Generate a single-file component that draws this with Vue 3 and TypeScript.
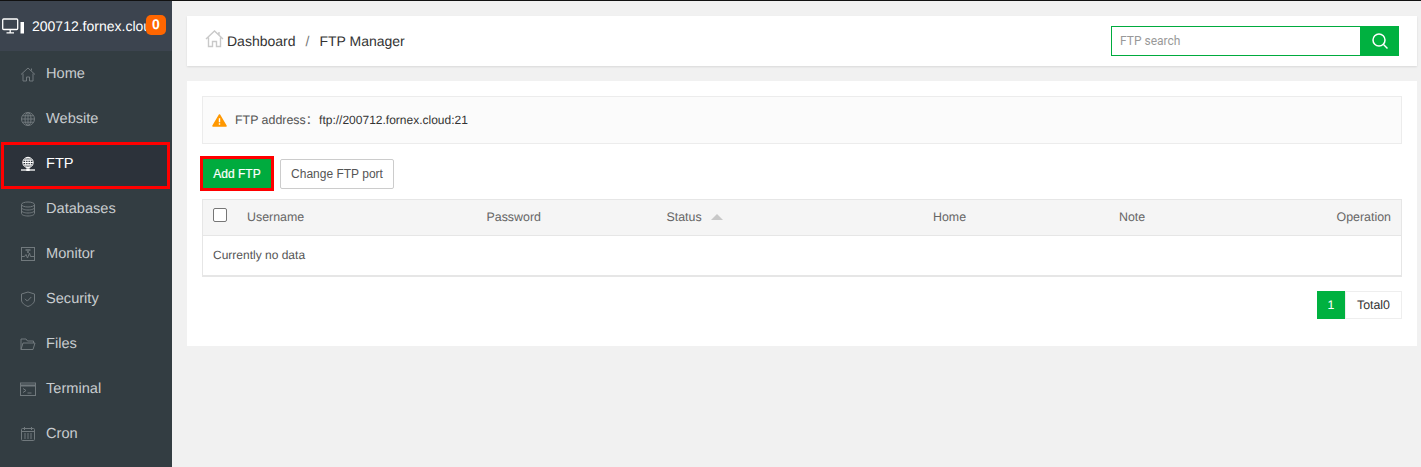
<script setup lang="ts">
interface Item { label: string; icon: string; active?: boolean }
const items: Item[] = [
  { label: 'Home', icon: 'home' },
  { label: 'Website', icon: 'globe' },
  { label: 'FTP', icon: 'ftp', active: true },
  { label: 'Databases', icon: 'db' },
  { label: 'Monitor', icon: 'monitor' },
  { label: 'Security', icon: 'shield' },
  { label: 'Files', icon: 'folder' },
  { label: 'Terminal', icon: 'term' },
  { label: 'Cron', icon: 'cal' },
]
</script>

<template>
  <div class="page">
    <aside class="side">
      <div class="brand">
        <svg class="pc" width="23" height="16" viewBox="0 0 23 16" fill="none" stroke="#fff" stroke-width="1.300">
          <rect x="0.700" y="1" width="15" height="10.500" rx="1" />
          <path d="M4.500 14.800h7.500M8.200 12v2.500" />
          <rect x="18.500" y="4" width="3.500" height="11.500" fill="#fff" stroke="none" />
        </svg>
        <span class="host">200712.fornex.cloud</span>
        <span class="badge">0</span>
      </div>
      <nav class="nav">
        <div v-for="it in items" :key="it.label" class="item" :class="{ active: it.active }">
          <svg class="ico" width="16" height="16" viewBox="0 0 16 16" fill="none" stroke="currentColor" stroke-width="1">
            <template v-if="it.icon === 'home'">
              <path d="M1 8.500 8 2l7 6.500M3 7.500V15h3.500v-4h3v4H13V7.500M11.500 2.500v2" />
            </template>
            <template v-else-if="it.icon === 'globe'">
              <circle cx="8" cy="8" r="6.500" />
              <ellipse cx="8" cy="8" rx="3" ry="6.500" />
              <path d="M8 1.500v13M1.500 8h13M2.500 4.800h11M2.500 11.200h11" />
            </template>
            <template v-else-if="it.icon === 'ftp'">
              <circle cx="8" cy="6.500" r="5.200" />
              <ellipse cx="8" cy="6.500" rx="2.400" ry="5.200" />
              <path d="M8 1.300v10.400M2.800 6.500h10.400M3.500 4.200h9M3.500 8.800h9" />
              <path d="M1 14h14" stroke-width="1.300" />
              <rect x="6.300" y="12.300" width="3.400" height="2.700" fill="currentColor" stroke="none" />
            </template>
            <template v-else-if="it.icon === 'db'">
              <ellipse cx="8" cy="3.500" rx="6.500" ry="2.500" />
              <path d="M1.500 3.500v9c0 1.400 2.900 2.500 6.500 2.500s6.500-1.100 6.500-2.500v-9M1.500 6.500c0 1.400 2.900 2.500 6.500 2.500s6.500-1.100 6.500-2.500M1.500 9.500c0 1.400 2.900 2.500 6.500 2.500s6.500-1.100 6.500-2.500" />
            </template>
            <template v-else-if="it.icon === 'monitor'">
              <rect x="1.500" y="1.500" width="13" height="13" />
              <path d="M1.500 10.500h3l1.500-2 1.500 3.500 2-5 1 3.500h3.500" />
              <path d="M5.500 4h5M7 6h2" stroke-width="1.300" />
            </template>
            <template v-else-if="it.icon === 'shield'">
              <path d="M8 1 14.500 3v6c0 3-3 5.200-6.500 6.500C4.500 14.200 1.500 12 1.500 9V3z" />
              <path d="m5 7.800 2.300 2.300L11.300 6" />
            </template>
            <template v-else-if="it.icon === 'folder'">
              <path d="M1 13.500V3h5l1.500 2h6v2M1 13.500 3 7h12l-2 6.500z" />
            </template>
            <template v-else-if="it.icon === 'term'">
              <rect x="0.500" y="2" width="15" height="12.500" />
              <path d="M.5 4.500h15" stroke-width="2" />
              <path d="m3 7.500 3 2-3 2M7.500 12h4" />
            </template>
            <template v-else>
              <rect x="1.500" y="2.500" width="13" height="12" rx="1" />
              <path d="M4.500 1v3M11.500 1v3M1.500 5.500h13" />
              <path d="M4 8h8M4 10h8M4 12h8" stroke-dasharray="2 1" />
            </template>
          </svg>
          <span class="label">{{ it.label }}</span>
        </div>
      </nav>
    </aside>

    <main class="main">
      <header class="crumbs">
        <div class="trail">
          <svg class="crumb-home" width="19" height="19" viewBox="0 0 19 19" fill="none" stroke="#c9c9c9" stroke-width="1.400">
            <path d="M1 10 9.500 2 18 10M3.500 8.500V17.500H7.500V12.500H11.500V17.500H15.500V8.500M14 3v3" />
          </svg>
          <span class="crumb">Dashboard</span>
          <span class="sep">/</span>
          <span class="crumb">FTP Manager</span>
        </div>
        <div class="search">
          <input class="search-input" type="text" placeholder="FTP search" />
          <button class="search-btn" type="button" aria-label="Search">
            <svg width="18" height="18" viewBox="0 0 18 18" fill="none" stroke="#fff" stroke-width="1.500">
              <circle cx="8" cy="8" r="6" />
              <path d="m12.500 12.500 4 4" />
            </svg>
          </button>
        </div>
      </header>

      <section class="card">
        <div class="notice">
          <svg class="warn" width="15" height="13" viewBox="0 0 15 13">
            <path d="M7.500 1 14 12H1z" fill="#ff9800" stroke="#ff9800" stroke-width="1.500" stroke-linejoin="round" />
            <path d="M7.500 4.300v4M7.500 9.300v1.500" stroke="#fff" stroke-width="1.400" />
          </svg>
          <span class="n-label">FTP address：</span>
          <span class="n-value">ftp://200712.fornex.cloud:21</span>
        </div>

        <div class="tools">
          <span class="mark"><button class="btn-add" type="button">Add FTP</button></span>
          <button class="btn-port" type="button">Change FTP port</button>
        </div>

        <div class="table">
          <div class="thead">
            <span class="check"></span>
            <span class="c-user">Username</span>
            <span class="c-pass">Password</span>
            <span class="c-status">Status<i class="caret"></i></span>
            <span class="c-home">Home</span>
            <span class="c-note">Note</span>
            <span class="c-op">Operation</span>
          </div>
          <div class="empty">Currently no data</div>
        </div>

        <div class="pager">
          <span class="pg-cur">1</span>
          <span class="pg-total">Total0</span>
        </div>
      </section>
    </main>
  </div>
</template>

<style>
html, body { margin: 0; background: #f1f1f1; overflow: hidden; }
</style>

<style scoped>
.page {
  display: flex;
  width: 1421px;
  height: 467px;
  box-sizing: border-box;
  border-top: 1px solid #111;
  background: #f1f1f1;
  font-family: "Liberation Sans", Arial, "Noto Sans CJK SC", sans-serif;
  text-rendering: geometricPrecision;
  overflow: hidden;
}
.side { width: 172px; flex: none; background: #333d42; color: #c4c9cb; }
.brand {
  height: 50px;
  position: relative;
  display: flex;
  align-items: center;
  background: #3c444f;
  color: #fff;
  font-size: 14px;
  overflow: hidden;
}
.pc { margin-left: 2px; flex: none; }
.host { margin-left: 7px; width: 114px; overflow: hidden; white-space: nowrap; }
.badge {
  position: absolute;
  left: 146px;
  top: 14px;
  width: 20px;
  height: 20px;
  border-radius: 5px;
  background: #f60;
  color: #fff;
  font-weight: 700;
  font-size: 14px;
  line-height: 19px;
  text-align: center;
}
.item {
  position: relative;
  height: 45px;
  display: flex;
  align-items: center;
  box-sizing: border-box;
  padding-left: 20px;
  font-size: 14.6px;
  color: #c8cccf;
}
.item .ico { position: relative; margin-right: 10px; color: #71797d; flex: none; }
.label { position: relative; }
.active { color: #fff; }
.active::before {
  content: "";
  position: absolute;
  left: 1px;
  top: 1px;
  width: 169px;
  height: 47px;
  box-sizing: border-box;
  border: 3px solid #f00;
  background: #2c323a;
}
.active .ico { color: #fff; }

.main { flex: 1; padding: 15px 4px 0 15px; min-width: 0; }
.crumbs {
  height: 50px;
  display: flex;
  align-items: center;
  justify-content: space-between;
  padding: 0 18px;
  background: #fff;
  box-shadow: 0 1px 2px rgba(0,0,0,.1);
}
.trail { display: flex; align-items: center; font-size: 14px; color: #333; }
.crumb-home { margin-right: 3px; margin-top: -5px; }
.sep { margin: 0 10px; color: #777; }
.search { display: flex; height: 30px; }
.search-input {
  width: 249px;
  box-sizing: border-box;
  border: 1px solid #00ab3e;
  border-right: none;
  outline: none;
  padding: 0 8px;
  font: 12px "Roboto", "Liberation Sans", sans-serif;
}
.search-input::placeholder { color: #999; opacity: 1; }
.search-btn {
  width: 39px;
  border: none;
  padding: 0;
  background: #00b140;
  display: flex;
  align-items: center;
  justify-content: center;
}
.card {
  margin-top: 15px;
  height: 265px;
  box-sizing: border-box;
  padding: 15px;
  background: #fff;
}
.notice {
  height: 48px;
  box-sizing: border-box;
  display: flex;
  align-items: center;
  border: 1px solid #ececec;
  background: #fbfbfb;
  padding-left: 9px;
  font-size: 12px;
  line-height: 16px;
  color: #333;
}
.warn { margin-right: 8px; }
.n-label { color: #555; font-size: 12.4px; }
.n-value { margin-left: 1px; }
.tools { display: flex; align-items: center; margin-top: 12px; gap: 6px; margin-left: -2px; height: 35px; }
.mark { display: block; border: 3px solid #f00; height: 35px; box-sizing: border-box; }
.btn-add {
  display: block;
  width: 68px;
  height: 29px;
  border: none;
  padding: 0;
  background: #00ab3e;
  color: #fff;
  font: 12px "Liberation Sans", sans-serif;
  -webkit-text-stroke: 0.2px #fff;
}
.btn-port {
  width: 114px;
  height: 30px;
  border: 1px solid #ccc;
  border-radius: 2px;
  background: #fff;
  color: #555;
  padding: 0;
  font: 12px "Liberation Sans", sans-serif;
}
.table { margin-top: 8px; border: 1px solid #e6e6e6; border-bottom-width: 2px; font-size: 12.4px; color: #666; }
.thead { height: 35px; box-sizing: content-box; background: #f5f5f5; border-bottom: 1px solid #e6e6e6; display: flex; align-items: center; padding-bottom: 0; }
.thead > span { position: relative; top: -1px; }
.check {
  width: 12px;
  height: 12px;
  margin-left: 10px;
  margin-top: -3px;
  border: 1px solid #767676;
  border-radius: 2px;
  background: #fff;
  flex: none;
}
.thead span:not(.check) { flex: none; }
.c-user { width: 239.5px; margin-left: 20px; }
.c-pass { width: 180px; }
.c-status { width: 266.5px; display: flex; align-items: center; }
.c-home { width: 186px; }
.c-note { width: 217px; }
.c-op { width: 55px; text-align: right; }
.caret {
  margin-left: 9px;
  width: 0;
  height: 0;
  border-left: 6px solid transparent;
  border-right: 6px solid transparent;
  border-bottom: 6px solid #c8c8c8;
}
.empty { height: 39px; line-height: 38px; padding-left: 10px; background: #fff; color: #555; font-size: 12px; }
.pager { display: flex; justify-content: flex-end; margin-top: 14px; font-size: 12.4px; }
.pg-cur { width: 28px; height: 28px; background: #00b140; color: #fff; line-height: 28px; text-align: center; }
.pg-total { height: 28px; box-sizing: border-box; width: 57px; border: 1px solid #eee; color: #333; line-height: 26px; text-align: center; }
</style>
